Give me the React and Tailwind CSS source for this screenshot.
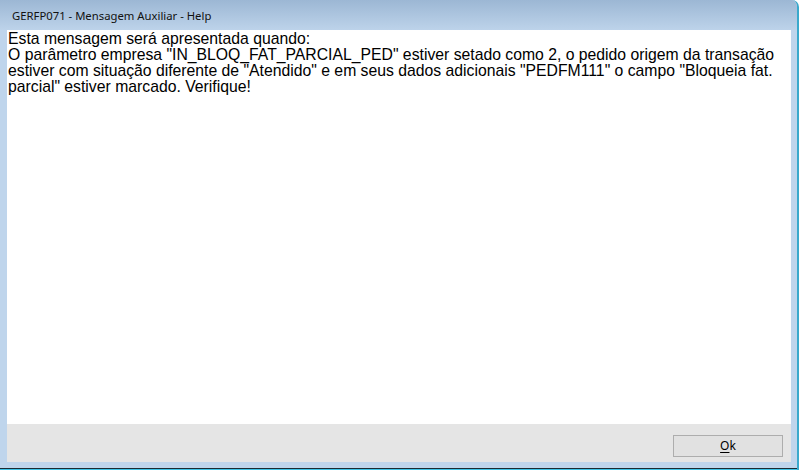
export default function App() {
  const lines = [
    'Esta mensagem será apresentada quando:',
    'O parâmetro empresa "IN_BLOQ_FAT_PARCIAL_PED" estiver setado como 2, o pedido origem da transação',
    'estiver com situação diferente de "Atendido" e em seus dados adicionais "PEDFM111" o campo "Bloqueia fat.',
    'parcial" estiver marcado. Verifique!',
  ];

  return (
    <div className="w-[799px] h-[470px] flex flex-col bg-[#bfd5ec] rounded-tr-[7px] overflow-hidden border-r-2 border-r-[#3aa9cc]">
      {/* Title bar */}
      <div className="h-[30px] shrink-0 flex items-center pl-[12px] pt-[2px] bg-gradient-to-b from-[#9cb7d4] to-[#bdd3ea]">
        <span className="text-[11.3px] text-[#111]" style={{ fontFamily: '"Noto Sans", sans-serif' }}>
          GERFP071 - Mensagem Auxiliar - Help
        </span>
      </div>

      {/* Client area */}
      <div className="flex-1 flex flex-col pl-[7px] pr-[6px]">
        <div className="flex-1 bg-white pl-[1px] pt-[1px]">
          <div className="text-[15.75px] leading-[16px] text-black" style={{ fontFamily: '"Liberation Sans", Arial, sans-serif' }}>
            {lines.map((l, i) => (
              <div key={i} className="whitespace-nowrap">{l}</div>
            ))}
          </div>
        </div>
        <div className="h-[38px] shrink-0 bg-[#e5e5e5] flex justify-end items-start pt-[11px] pr-[8px]">
          <button className="w-[110px] h-[22px] bg-[#e1e1e1] border border-[#adadad] text-[12px] text-black flex items-center justify-center" style={{ fontFamily: '"Noto Sans", sans-serif' }}>
            <span className="underline underline-offset-2">O</span>k
          </button>
        </div>
      </div>

      {/* Bottom border */}
      <div className="h-[6px] shrink-0" />
      <div className="h-[1px] shrink-0 bg-[#1c2a33]" />
      <div className="h-[1px] shrink-0 bg-[#3fc3e6]" />
    </div>
  );
}
